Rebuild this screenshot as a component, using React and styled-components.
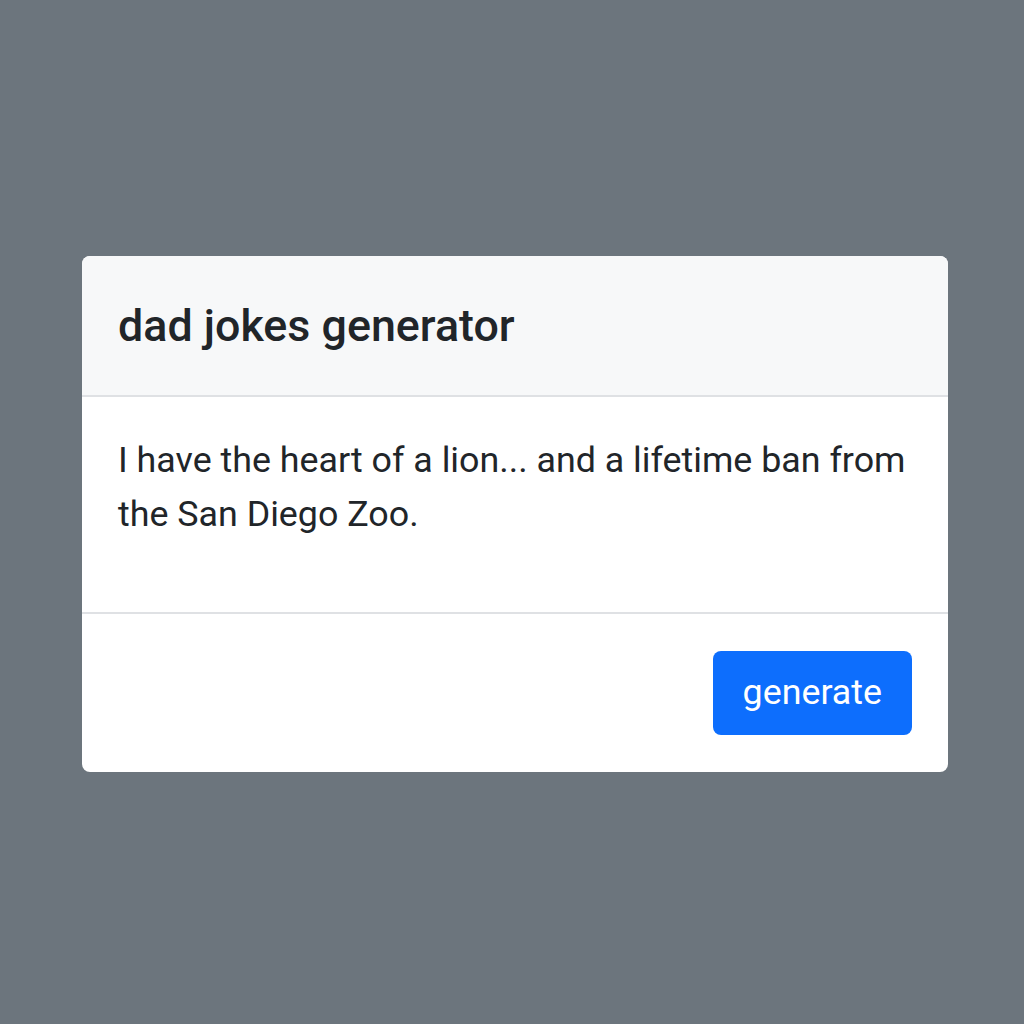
import React from "react";
import styled, { createGlobalStyle } from "styled-components";

const Global = createGlobalStyle`
  html, body { margin: 0; padding: 0; background: #6c757d; }
  body { font-family: Roboto, "Liberation Sans", sans-serif; color: #212529; }
`;

const Page = styled.div`
  min-height: 1024px;
  padding: 256px 0 0 82px;
  box-sizing: border-box;
`;

const Card = styled.div`
  width: 866px;
  background: #fff;
  border-radius: 8px;
  overflow: hidden;
  display: flex;
  flex-direction: column;
`;

const Header = styled.div`
  background: #f7f8f9;
  border-bottom: 2px solid #dfe1e4;
  padding: 43px 36px 0;
  height: 141px;
  box-sizing: border-box;
`;

const Title = styled.h5`
  margin: 0;
  font-size: 44.8px;
  font-weight: 500;
  line-height: 53px;
`;

const Body = styled.div`
  padding: 36px 36px 0;
  height: 217px;
  box-sizing: border-box;
  border-bottom: 2px solid #dfe1e4;
`;

const Joke = styled.p`
  margin: 0;
  font-size: 35.8px;
  line-height: 54px;
`;

const Footer = styled.div`
  height: 158px;
  box-sizing: border-box;
  padding: 0 36px;
  display: flex;
  align-items: center;
  justify-content: flex-end;
`;

const Button = styled.button`
  height: 84px;
  padding: 0 30px 2px;
  background: #0d6efd;
  color: #fff;
  border: none;
  border-radius: 8px;
  font-family: Roboto, "Liberation Sans", sans-serif;
  font-size: 35.8px;
  line-height: 54px;
  cursor: pointer;
`;

export default function App() {
  return (
    <>
      <Global />
      <Page>
        <Card>
          <Header>
            <Title>dad jokes generator</Title>
          </Header>
          <Body>
            <Joke>I have the heart of a lion... and a lifetime ban from the San Diego Zoo.</Joke>
          </Body>
          <Footer>
            <Button>generate</Button>
          </Footer>
        </Card>
      </Page>
    </>
  );
}
